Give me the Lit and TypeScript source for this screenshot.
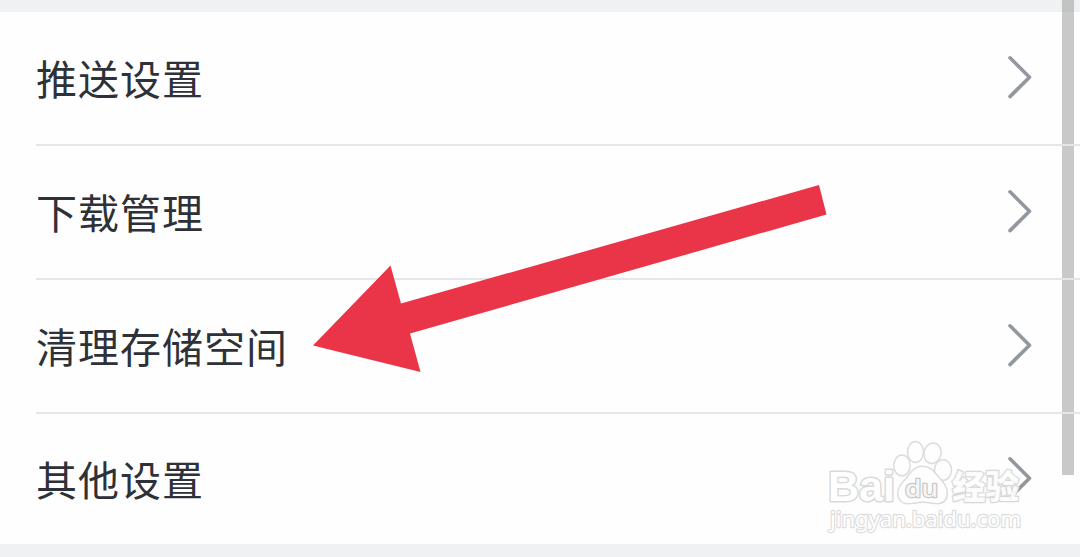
import { LitElement, html, css } from "lit";
import { customElement, property } from "lit/decorators.js";

@customElement("setting-row")
export class SettingRow extends LitElement {
  @property() label = "";

  static styles = css`
    :host {
      display: block;
      padding-left: 36px;
    }
    .row {
      height: 100%;
      box-sizing: border-box;
      display: flex;
      align-items: center;
      justify-content: space-between;
      padding: 0 48px 2px 0;
      border-bottom: 2px solid #e5e6e7;
    }
    :host([last]) .row {
      border-bottom: none;
    }
    .label {
      padding-bottom: 1px;
      font-size: 41px;
      line-height: 60px;
      letter-spacing: 1px;
      color: #2e3138;
    }
    .chevron {
      display: block;
      width: 26px;
      height: 46px;
      fill: none;
      stroke: #92989e;
      stroke-width: 3.6;
      stroke-linecap: round;
      stroke-linejoin: round;
    }
  `;

  render() {
    return html`
      <div class="row">
        <span class="label">${this.label}</span>
        <svg class="chevron" viewBox="0 0 26 46">
          <path d="M4 3.8L23.500 23.200L4 42.600" />
        </svg>
      </div>
    `;
  }
}

@customElement("app-root")
export class AppRoot extends LitElement {
  static styles = css`
    :host {
      display: block;
      font-family: "Noto Sans CJK SC", sans-serif;
    }
    .page {
      position: relative;
      height: 557px;
      overflow: hidden;
      box-sizing: border-box;
      padding: 12px 0 13px;
      background: #f0f1f3;
    }
    .list {
      height: 532px;
      display: grid;
      grid-template-rows: 134px 134px 134px 130px;
      background: #fefefe;
    }
    /* dividers stay visible across the scrollbar */
    setting-row {
      position: relative;
      z-index: 1;
    }
    .scrollbar {
      position: absolute;
      top: 0;
      right: 6px;
      width: 12px;
      height: 475px;
      background: linear-gradient(#c2c4c4 12px, #c9c9c9 12px);
    }
    .arrow {
      position: absolute;
      z-index: 2;
      left: 0;
      top: 0;
      fill: #ea3448;
    }
    .watermark {
      position: absolute;
      z-index: 2;
      left: 820px;
      top: 432px;
      fill: #ffffff;
      stroke: #d9d9d9;
      stroke-linejoin: round;
      paint-order: stroke;
    }
    .paw {
      fill: #fefefe;
      stroke: #dcdcdc;
      stroke-width: 3;
    }
    .brand {
      font: 700 43px "Liberation Sans", sans-serif;
      stroke-width: 3;
    }
    .du {
      font: 500 24px "Noto Sans", sans-serif;
      fill: #f5f5f5;
      stroke: #c8c8c8;
      stroke-width: 2.4;
    }
    .cn {
      font: 900 33px "Noto Sans CJK SC", sans-serif;
      stroke-width: 2.4;
      fill-opacity: 0.9;
    }
    .site {
      font: 400 22px "Noto Sans", sans-serif;
      stroke: #dddddd;
      stroke-width: 2.4;
    }
  `;

  render() {
    const labels = ["推送设置", "下载管理", "清理存储空间", "其他设置"];
    return html`
      <div class="page">
        <div class="list">
          ${labels.map(
            (label, i) => html`
              <setting-row
                .label=${label}
                ?last=${i === labels.length - 1}
              ></setting-row>
            `
          )}
        </div>
        <div class="scrollbar"></div>
        <svg class="arrow" width="1080" height="557">
          <polygon
            points="313,345.5 390.5,265.5 401,303.5 819,185 826.5,214.5 410,333.5 420.5,372"
          />
        </svg>
        <svg class="watermark" width="220" height="110">
          <text class="brand" x="8" y="69" textLength="67" lengthAdjust="spacingAndGlyphs">Bai</text>
          <g class="paw">
            <ellipse cx="82" cy="33.5" rx="7.5" ry="9.7" />
            <ellipse cx="95.5" cy="20" rx="7.2" ry="9.8" />
            <ellipse cx="112.5" cy="21.3" rx="7.8" ry="9.6" transform="rotate(12 112.5 21.3)" />
            <ellipse cx="123" cy="38" rx="7.8" ry="9.6" />
            <path
              d="M102 35C95 35 91 41 87.500 46C83 51 78.500 55 78.500 61C78.500 68 83 71 88 71C94 71 97 69.500 103 69.500C109 69.500 112 71 118 71C124 70 127 66 126.500 60C126 53 121 49 116 43C112 38 109 35 102 35Z"
            />
          </g>
          <text class="du" x="85" y="65" textLength="33" lengthAdjust="spacingAndGlyphs">du</text>
          <text class="cn" x="132" y="67" textLength="67" lengthAdjust="spacingAndGlyphs">经验</text>
          <text class="site" x="10" y="95" textLength="191" lengthAdjust="spacingAndGlyphs">jingyan.baidu.com</text>
        </svg>
      </div>
    `;
  }
}

declare global {
  interface HTMLElementTagNameMap {
    "setting-row": SettingRow;
    "app-root": AppRoot;
  }
}
